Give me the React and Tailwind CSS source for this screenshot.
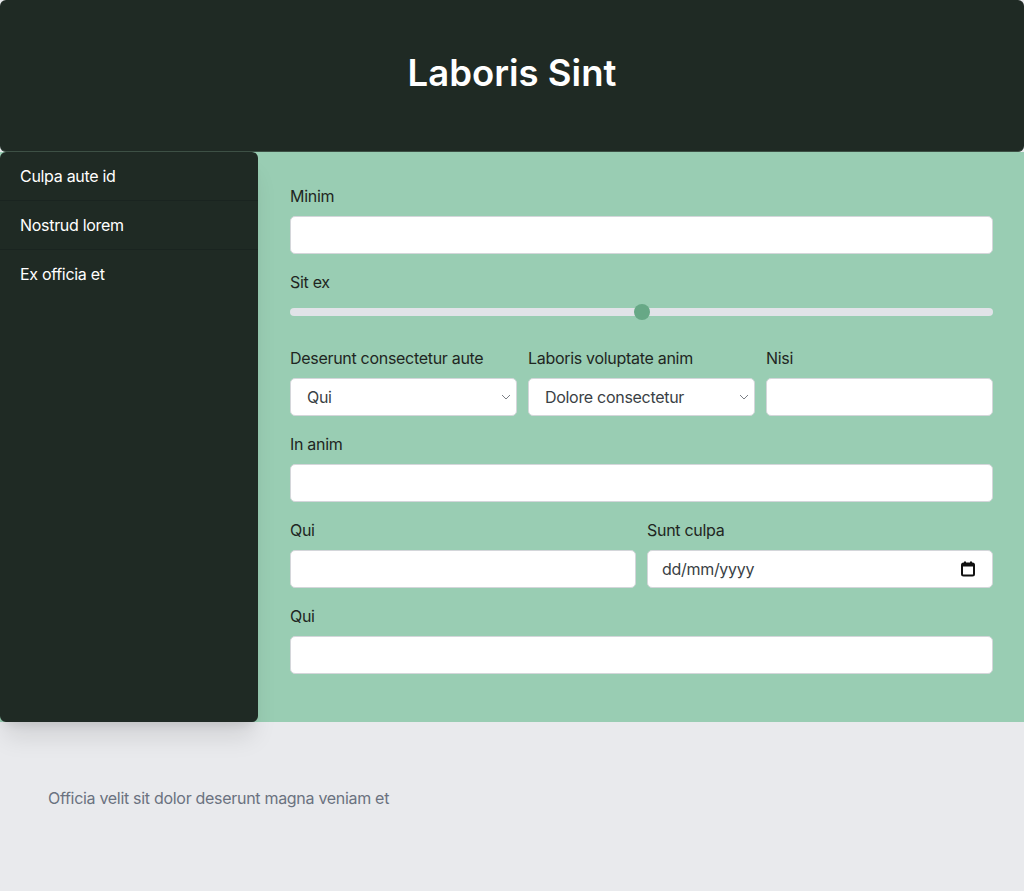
import React, { useState } from 'react';

const MENU = ['Culpa aute id', 'Nostrud lorem', 'Ex officia et'];

function Label({ children }) {
  return <label className="block mb-2 text-base leading-6 tracking-[-0.3px] text-[#1f2622]">{children}</label>;
}

function TextInput() {
  return (
    <input
      type="text"
      className="block w-full h-[38px] px-4 rounded-[5px] border border-[#d4d6da] bg-white text-base text-gray-700 outline-none"
    />
  );
}

function Select({ value, options }) {
  return (
    <div className="relative">
      <select
        defaultValue={value}
        className="block w-full h-[38px] pl-4 pr-8 rounded-[5px] border border-[#d4d6da] bg-white text-base tracking-[-0.3px] text-[#3a3f45] appearance-none outline-none"
      >
        {options.map((o) => (
          <option key={o}>{o}</option>
        ))}
      </select>
      {/* chevron */}
      <svg
        className="absolute right-[6px] top-1/2 -translate-y-1/2 pointer-events-none"
        width="10"
        height="6"
        viewBox="0 0 10 6"
        fill="none"
      >
        <path d="M1 1l4 4 4-4" stroke="#7b7f85" strokeWidth="1" />
      </svg>
    </div>
  );
}

function DateField() {
  return (
    <div className="flex items-center justify-between w-full h-[38px] pl-[14px] pr-[17px] rounded-[5px] border border-[#d4d6da] bg-white">
      <span className="text-base tracking-[-0.3px] text-[#3a3f45]">dd/mm/yyyy</span>
      {/* calendar icon */}
      <svg width="14" height="16" viewBox="0 0 14 16" fill="none">
        <rect x="1" y="2.5" width="12" height="12" rx="1.5" stroke="#111" strokeWidth="2" />
        <rect x="1" y="2.5" width="12" height="3" fill="#111" />
        <rect x="3" y="0.5" width="2" height="3" fill="#111" />
        <rect x="9" y="0.5" width="2" height="3" fill="#111" />
      </svg>
    </div>
  );
}

function Slider({ value }) {
  return (
    <div className="relative h-4 mt-[10px] mb-[26px] flex items-center">
      <div className="w-full h-2 rounded-full bg-[#e1e3e8]" />
      <div
        className="absolute top-0 w-4 h-4 -ml-2 rounded-full bg-[#67a886]"
        style={{ left: `${value}%` }}
      />
    </div>
  );
}

export default function App() {
  const [range] = useState(50);

  return (
    <div className="min-h-[891px] flex flex-col bg-[#e9eaed] font-['Inter',sans-serif]">
      {/* 헤더 */}
      <header className="h-[152px] pb-[6px] flex items-center justify-center rounded-md bg-[#1f2a24] border-b border-[#3d5045]">
        <h1 className="text-[36.5px] leading-10 font-semibold text-white">Laboris Sint</h1>
      </header>

      {/* 본문 */}
      <div className="flex bg-[#99cdb3]">
        <nav className="relative z-10 w-[258px] shrink-0 rounded-md bg-[#1f2a24] shadow-xl">
          {MENU.map((item, i) => (
            <div
              key={item}
              className={
                i < MENU.length - 1
                  ? 'px-5 py-3 text-base leading-6 tracking-[-0.3px] text-white border-b border-[#1a2420]'
                  : 'px-5 py-3 text-base leading-6 tracking-[-0.3px] text-white'
              }
            >
              {item}
            </div>
          ))}
        </nav>

        <main className="flex-1 pl-8 pr-[31px] pt-8 pb-8">
          <div className="mb-4">
            <Label>Minim</Label>
            <TextInput />
          </div>

          <div>
            <Label>Sit ex</Label>
            <Slider value={range} />
          </div>

          <div className="grid grid-cols-3 gap-x-[11px] mb-4">
            <div>
              <Label>Deserunt consectetur aute</Label>
              <Select value="Qui" options={['Qui', 'Amet', 'Elit']} />
            </div>
            <div>
              <Label>Laboris voluptate anim</Label>
              <Select value="Dolore consectetur" options={['Dolore consectetur', 'Irure', 'Velit']} />
            </div>
            <div>
              <Label>Nisi</Label>
              <TextInput />
            </div>
          </div>

          <div className="mb-4">
            <Label>In anim</Label>
            <TextInput />
          </div>

          <div className="grid grid-cols-2 gap-x-[11px] mb-4">
            <div>
              <Label>Qui</Label>
              <TextInput />
            </div>
            <div>
              <Label>Sunt culpa</Label>
              <DateField />
            </div>
          </div>

          <div className="mb-4">
            <Label>Qui</Label>
            <TextInput />
          </div>
        </main>
      </div>

      {/* 푸터 */}
      <footer className="flex-1 px-12 py-16 rounded-md bg-[#e9eaed]">
        <p className="text-base leading-6 tracking-[-0.3px] text-[#6b7280]">Officia velit sit dolor deserunt magna veniam et</p>
      </footer>
    </div>
  );
}
